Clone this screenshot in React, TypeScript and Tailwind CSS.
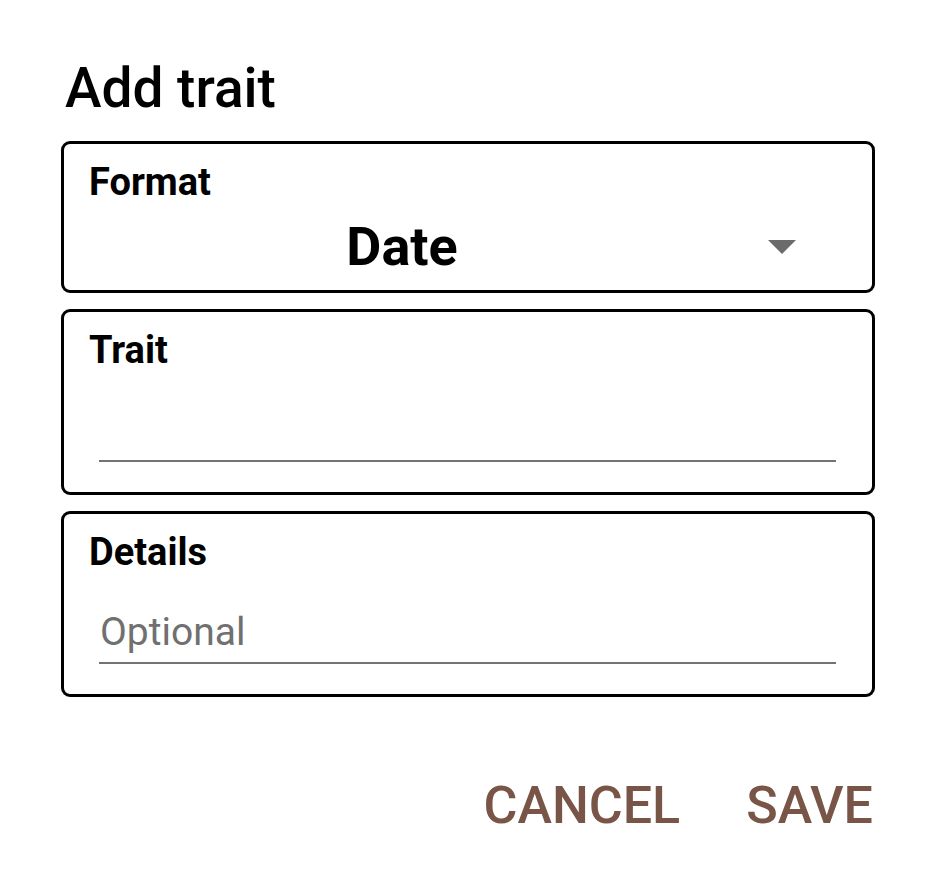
import { useState } from "react";

function FieldBox({ children, className = "" }: { children: React.ReactNode; className?: string }) {
  return <div className={`rounded-[9px] border-[3px] border-black ${className}`}>{children}</div>;
}

function TextField({ label, placeholder, value, onChange }: {
  label: string;
  placeholder?: string;
  value: string;
  onChange: (value: string) => void;
}) {
  return (
    <FieldBox className="pt-[16px] pb-[30px]">
      <div className="pl-[25px] text-[38px] font-bold leading-[44px] text-black">{label}</div>
      <div className="mt-[34px] pl-[35px] pr-[36px]">
        <input
          className="box-border block h-[56px] w-full border-b-[2.5px] border-[#737373] bg-transparent pb-[6px] pl-[1px] text-[39px] leading-[48px] text-black outline-none placeholder:text-[#707070]"
          onChange={(event) => onChange(event.target.value)}
          placeholder={placeholder}
          value={value}
        />
      </div>
    </FieldBox>
  );
}

export default function App() {
  const [trait, setTrait] = useState("");
  const [details, setDetails] = useState("");

  return (
    <div className="min-h-[885px] w-[933px] bg-white font-['Roboto',sans-serif]">
      <div className="ml-[61px] w-[814px] pt-[56px]">
        <h1 className="pl-[4px] text-[55px] font-medium leading-[64px] text-black">Add trait</h1>

        <div className="mt-[21px] flex flex-col gap-[16px]">
          <FieldBox className="pt-[16px] pb-[12px]">
            <div className="pl-[25px] text-[38px] font-bold leading-[44px] text-black">Format</div>
            <div className="mt-[12px] flex items-center pl-[25px]">
              <div className="flex-1 text-center text-[54px] font-bold leading-[62px] text-black">Date</div>
              <div className="flex w-[157px] justify-end pr-[76px]">
                <svg width="28" height="14" viewBox="0 0 28 14">
                  <path d="M0 0 L28 0 L14 14 Z" fill="#6b6b6b" />
                </svg>
              </div>
            </div>
          </FieldBox>

          <TextField label="Trait" value={trait} onChange={setTrait} />
          <TextField label="Details" placeholder="Optional" value={details} onChange={setDetails} />
        </div>

        <div className="mt-[79px] flex justify-end gap-[66px] pr-[2px]">
          <button className="text-[52px] font-medium leading-[60px] text-[#795548]" type="button">
            CANCEL
          </button>
          <button className="text-[52px] font-medium leading-[60px] text-[#795548]" type="button">
            SAVE
          </button>
        </div>
      </div>
    </div>
  );
}
